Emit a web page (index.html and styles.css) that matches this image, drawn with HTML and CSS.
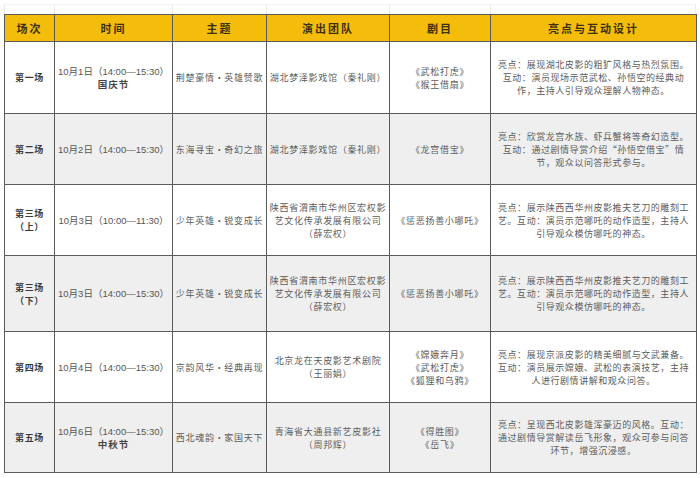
FILE: index.html
```html
<!DOCTYPE html>
<html lang="zh">
<head>
<meta charset="utf-8">
<link rel="stylesheet" href="styles.css">
</head>
<body>
<div class="page">
  <div class="ghost">
    <span class="g1"></span><span class="g2"></span><span class="g3"></span><span class="g4"></span><span class="g5"></span><span class="g6"></span>
  </div>
  <table class="sched">
    <colgroup>
      <col class="c1"><col class="c2"><col class="c3"><col class="c4"><col class="c5"><col class="c6">
    </colgroup>
    <thead>
      <tr class="head">
        <th>场次</th><th>时间</th><th>主题</th><th>演出团队</th><th>剧目</th><th>亮点与互动设计</th>
      </tr>
    </thead>
    <tbody>
      <tr class="r1">
        <td>第一场</td>
        <td class="time">10月1日（14:00—15:30）<br><b>国庆节</b></td>
        <td>荆楚豪情・英雄赞歌</td>
        <td>湖北梦泽影戏馆（秦礼刚）</td>
        <td>《武松打虎》<br>《猴王借扇》</td>
        <td class="hl">亮点：展现湖北皮影的粗犷风格与热烈氛围。<br>互动：演员现场示范武松、孙悟空的经典动<br>作，主持人引导观众理解人物神态。</td>
      </tr>
      <tr class="r2 alt">
        <td>第二场</td>
        <td class="time">10月2日（14:00—15:30）</td>
        <td>东海寻宝・奇幻之旅</td>
        <td>湖北梦泽影戏馆（秦礼刚）</td>
        <td>《龙宫借宝》</td>
        <td class="hl">亮点：欣赏龙宫水族、虾兵蟹将等奇幻造型。<br>互动：通过剧情导赏介绍“孙悟空借宝”情<br>节，观众以问答形式参与。</td>
      </tr>
      <tr class="r3">
        <td>第三场<br>（上）</td>
        <td class="time">10月3日（10:00—11:30）</td>
        <td>少年英雄・锐变成长</td>
        <td>陕西省渭南市华州区宏权影<br>艺文化传承发展有限公司<br>（薛宏权）</td>
        <td>《惩恶扬善小哪吒》</td>
        <td class="hl">亮点：展示陕西西华州皮影推夫艺刀的雕刻工<br>艺。互动：演员示范哪吒的动作造型，主持人<br>引导观众模仿哪吒的神态。</td>
      </tr>
      <tr class="r4 alt">
        <td>第三场<br>（下）</td>
        <td class="time">10月3日（14:00—15:30）</td>
        <td>少年英雄・锐变成长</td>
        <td>陕西省渭南市华州区宏权影<br>艺文化传承发展有限公司<br>（薛宏权）</td>
        <td>《惩恶扬善小哪吒》</td>
        <td class="hl">亮点：展示陕西西华州皮影推夫艺刀的雕刻工<br>艺。互动：演员示范哪吒的动作造型，主持人<br>引导观众模仿哪吒的神态。</td>
      </tr>
      <tr class="r5">
        <td>第四场</td>
        <td class="time">10月4日（14:00—15:30）</td>
        <td>京韵风华・经典再现</td>
        <td>北京龙在天皮影艺术剧院<br>（王丽娟）</td>
        <td>《嫦娥奔月》<br>《武松打虎》<br>《狐狸和乌鸦》</td>
        <td class="hl">亮点：展现京派皮影的精美细腻与文武兼备。<br>互动：演员展示嫦娥、武松的表演技艺，主持<br>人进行剧情讲解和观众问答。</td>
      </tr>
      <tr class="r6 alt">
        <td>第五场</td>
        <td class="time">10月6日（14:00—15:30）<br><b>中秋节</b></td>
        <td>西北魂韵・家国天下</td>
        <td>青海省大通县新艺皮影社<br>（周邦辉）</td>
        <td>《得胜图》<br>《岳飞》</td>
        <td class="hl">亮点：呈现西北皮影雄浑豪迈的风格。互动：<br>通过剧情导赏解读岳飞形象，观众可参与问答<br>环节，增强沉浸感。</td>
      </tr>
    </tbody>
  </table>
</div>
</body>
</html>
```

FILE: styles.css
```css
html, body {
  margin: 0;
  padding: 0;
  background: #ffffff;
}

.page {
  padding: 4px 0 0 4px;
  width: 692px;
  font-family: "Noto Sans CJK SC", "Noto Sans CJK JP", sans-serif;
}

.ghost {
  display: flex;
  height: 10px;
  border-top: 1px solid #f2f2f2;
  box-sizing: border-box;
}
.ghost span {
  border-left: 1px solid #ececec;
  box-sizing: border-box;
  height: 100%;
}
.ghost .g1 { width: 50px; }
.ghost .g2 { width: 118px; }
.ghost .g3 { width: 94px; }
.ghost .g4 { width: 123px; }
.ghost .g5 { width: 101px; }
.ghost .g6 { width: 206px; border-right: 1px solid #ececec; }

.sched {
  border-collapse: collapse;
  table-layout: fixed;
  width: 692px;
}

.c1 { width: 50px; }
.c2 { width: 118px; }
.c3 { width: 94px; }
.c4 { width: 123px; }
.c5 { width: 101px; }
.c6 { width: 206px; }

.sched th,
.sched td {
  border: 1px solid #5a5a5a;
  padding: 0 2px;
  text-align: center;
  vertical-align: middle;
  white-space: nowrap;
}

.head th {
  background: #f4bd0b;
  height: 26px;
  font-size: 11px;
  font-weight: 700;
  letter-spacing: 2px;
  color: #3d3010;
}

.sched td {
  font-size: 9px;
  line-height: 13px;
  letter-spacing: 0.7px;
  color: #5c5c5c;
}

.sched td:first-child {
  color: #3a3a3a;
  font-weight: 600;
}

.sched td.time {
  font-family: "Liberation Sans", "Noto Sans CJK SC", sans-serif;
  letter-spacing: 0;
  font-size: 9.5px;
  color: #555;
}
.sched td.time b {
  font-family: "Noto Sans CJK SC", sans-serif;
  font-weight: 700;
  letter-spacing: 1px;
  color: #444;
}

.sched td.hl {
  letter-spacing: 0.55px;
  padding: 0 4px;
}

.alt td { background: #efefef; }

.r1 td { height: 71px; }
.r2 td { height: 70px; }
.r3 td { height: 70px; }
.r4 td { height: 75px; }
.r5 td { height: 70px; }
.r6 td { height: 69px; }
```
